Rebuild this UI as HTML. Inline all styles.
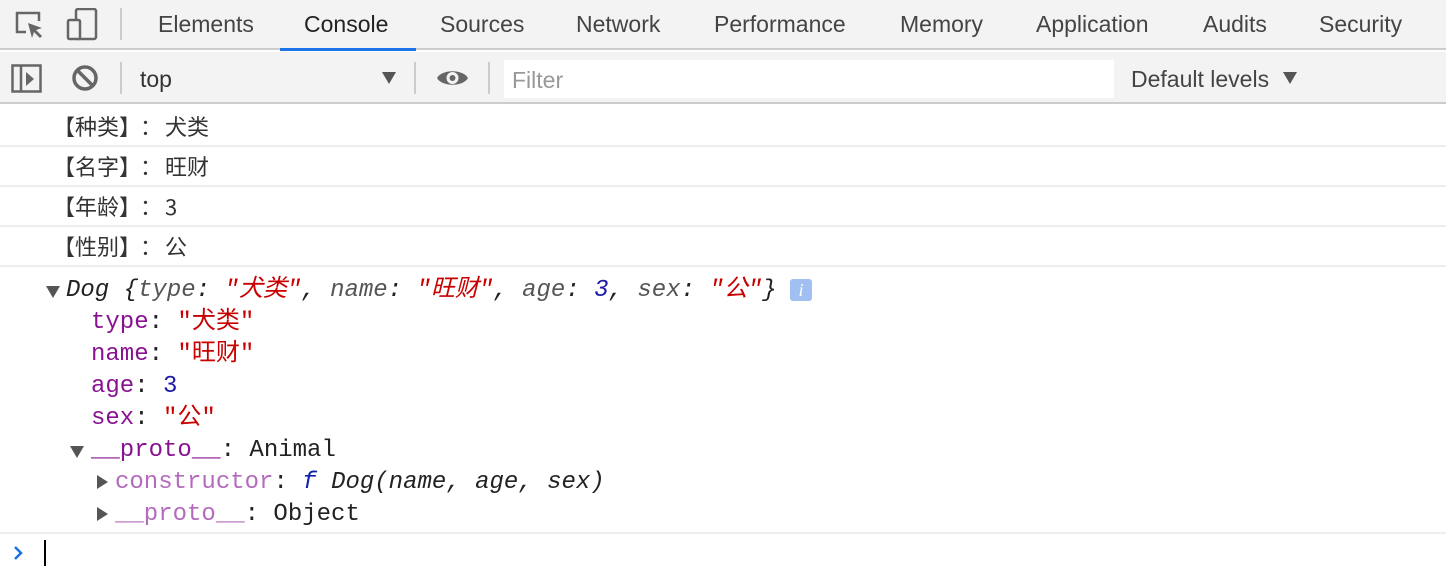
<!DOCTYPE html><html><head><meta charset="utf-8"><style>
*{margin:0;padding:0;box-sizing:border-box}
body{width:1446px;height:574px;background:#fff;position:relative;overflow:hidden;font-family:"Liberation Sans","Noto Sans CJK SC",sans-serif}
.a{position:absolute;white-space:pre}
.tab{position:absolute;top:11px;font-size:23px;color:#444}
.m{font-family:"Liberation Mono","Noto Sans CJK SC",monospace;font-size:24px;line-height:32px;position:absolute;white-space:pre;color:#222}
.p{color:#881391}.s{color:#c80000}.n{color:#1a1aa6}.i{font-style:italic}.g{color:#555}.pl{color:#b46bbd}
.log{position:absolute;left:0;width:1446px;height:40px;border-bottom:2px solid #eee;font-size:22px;color:#333;line-height:40px;font-family:"Noto Sans CJK SC","Liberation Sans",sans-serif}
.log span{position:absolute;top:-1px}
.tri{position:absolute;width:0;height:0}
</style></head><body>
<div class="a" style="left:0;top:0;width:1446px;height:50px;background:#f3f3f3;border-bottom:2px solid #ccc"></div>
<div class="a" style="left:0;top:52px;width:1446px;height:52px;background:#f3f3f3;border-bottom:2px solid #ccc"></div>
<svg class="a" style="left:14px;top:10px" width="34" height="32" viewBox="0 0 34 32"><path d="M12 22H3V3h22v8" fill="none" stroke="#666" stroke-width="2.5"/><path d="M14 13l14 5-6 2 6 6-2 2-6-6-2 6z" fill="#666"/></svg>
<svg class="a" style="left:66px;top:8px" width="34" height="34" viewBox="0 0 34 34"><rect x="10" y="1" width="20" height="30" rx="2" fill="none" stroke="#666" stroke-width="2.5"/><rect x="2" y="12" width="12" height="19" rx="1.5" fill="#f3f3f3" stroke="#666" stroke-width="2.5"/></svg>
<div class="a" style="left:120px;top:8px;width:2px;height:32px;background:#ccc"></div>
<div class="tab" style="left:158px">Elements</div>
<div class="tab" style="left:304px;color:#222">Console</div>
<div class="tab" style="left:440px">Sources</div>
<div class="tab" style="left:576px">Network</div>
<div class="tab" style="left:714px">Performance</div>
<div class="tab" style="left:900px">Memory</div>
<div class="tab" style="left:1036px">Application</div>
<div class="tab" style="left:1203px">Audits</div>
<div class="tab" style="left:1319px">Security</div>
<div class="a" style="left:280px;top:48px;width:136px;height:3px;background:#1a73e8"></div>
<svg class="a" style="left:11px;top:64px" width="32" height="30" viewBox="0 0 32 30"><rect x="1.5" y="1.5" width="28" height="26" fill="none" stroke="#666" stroke-width="2.5"/><line x1="10" y1="2" x2="10" y2="28" stroke="#666" stroke-width="2.5"/><path d="M15 8l8 7-8 7z" fill="#666"/></svg>
<svg class="a" style="left:71px;top:64px" width="28" height="28" viewBox="0 0 28 28"><circle cx="14" cy="14" r="11" fill="none" stroke="#666" stroke-width="3.5"/><line x1="6" y1="6" x2="22" y2="22" stroke="#666" stroke-width="3.5"/></svg>
<div class="a" style="left:120px;top:62px;width:2px;height:32px;background:#ccc"></div>
<div class="a" style="left:140px;top:66px;font-size:23px;color:#333">top</div>
<div class="tri" style="left:382px;top:72px;border-left:7px solid transparent;border-right:7px solid transparent;border-top:12px solid #555"></div>
<div class="a" style="left:414px;top:62px;width:2px;height:32px;background:#ccc"></div>
<svg class="a" style="left:436px;top:66px" width="33" height="24" viewBox="0 0 33 24"><path d="M1 12C6 3 27 3 32 12 27 21 6 21 1 12z" fill="#666"/><circle cx="16.5" cy="12" r="6" fill="#f3f3f3"/><circle cx="16.5" cy="12" r="3" fill="#666"/></svg>
<div class="a" style="left:488px;top:62px;width:2px;height:32px;background:#ccc"></div>
<div class="a" style="left:504px;top:60px;width:610px;height:38px;background:#fff"></div>
<div class="a" style="left:512px;top:67px;font-size:23px;color:#999">Filter</div>
<div class="a" style="left:1131px;top:66px;font-size:23px;color:#444">Default levels</div>
<div class="tri" style="left:1283px;top:72px;border-left:7px solid transparent;border-right:7px solid transparent;border-top:12px solid #555"></div>
<div class="log" style="top:107px"><span style="left:53px">【种类】</span><span style="left:140px">：</span><span style="left:165px">犬类</span></div>
<div class="log" style="top:147px"><span style="left:53px">【名字】</span><span style="left:140px">：</span><span style="left:165px">旺财</span></div>
<div class="log" style="top:187px"><span style="left:53px">【年龄】</span><span style="left:140px">：</span><span style="left:165px">3</span></div>
<div class="log" style="top:227px"><span style="left:53px">【性别】</span><span style="left:140px">：</span><span style="left:165px">公</span></div>
<div class="tri" style="left:46px;top:286px;border-left:7px solid transparent;border-right:7px solid transparent;border-top:12px solid #555"></div>
<div class="m i" style="left:66px;top:275px">Dog {<span class="g">type</span>: <span class="s">"犬类"</span>, <span class="g">name</span>: <span class="s">"旺财"</span>, <span class="g">age</span>: <span class="n">3</span>, <span class="g">sex</span>: <span class="s">"公"</span>}</div>
<div class="a" style="left:790px;top:279px;width:22px;height:22px;background:#9fc0f0;border-radius:3px;color:#fff;font-size:18px;font-style:italic;text-align:center;line-height:22px;font-family:'Liberation Serif',serif">i</div>
<div class="m" style="left:91px;top:307px"><span class="p">type</span>: <span class="s">"犬类"</span></div>
<div class="m" style="left:91px;top:339px"><span class="p">name</span>: <span class="s">"旺财"</span></div>
<div class="m" style="left:91px;top:371px"><span class="p">age</span>: <span class="n">3</span></div>
<div class="m" style="left:91px;top:403px"><span class="p">sex</span>: <span class="s">"公"</span></div>
<div class="tri" style="left:70px;top:446px;border-left:7px solid transparent;border-right:7px solid transparent;border-top:12px solid #555"></div>
<div class="m" style="left:91px;top:435px"><span class="p">__proto__</span>: Animal</div>
<div class="tri" style="left:97px;top:475px;border-top:7px solid transparent;border-bottom:7px solid transparent;border-left:11px solid #555"></div>
<div class="m" style="left:115px;top:467px"><span class="pl">constructor</span>: <span class="i" style="color:#0d22aa">f</span> <span class="i">Dog(name, age, sex)</span></div>
<div class="tri" style="left:97px;top:507px;border-top:7px solid transparent;border-bottom:7px solid transparent;border-left:11px solid #555"></div>
<div class="m" style="left:115px;top:499px"><span class="pl">__proto__</span>: Object</div>
<div class="a" style="left:0;top:532px;width:1446px;height:2px;background:#eee"></div>
<svg class="a" style="left:12px;top:544px" width="14" height="18" viewBox="0 0 14 18"><path d="M3 3l6 6-6 6" fill="none" stroke="#1a73e8" stroke-width="2.5"/></svg>
<div class="a" style="left:44px;top:540px;width:2px;height:26px;background:#000"></div>
</body></html>
